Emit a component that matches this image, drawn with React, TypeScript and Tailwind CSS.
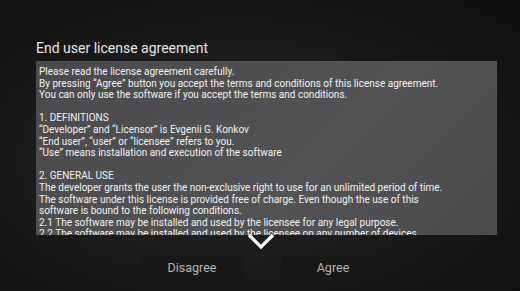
import React from "react";

const lines: string[] = [
  "Please read the license agreement carefully.",
  "By pressing \u201cAgree\u201d button you accept the terms and conditions of this license agreement.",
  "You can only use the software if you accept the terms and conditions.",
  "",
  "1. DEFINITIONS",
  "\u201cDeveloper\u201d and \u201cLicensor\u201d is Evgenii G. Konkov",
  "\u201cEnd user\u201d, \u201cuser\u201d or \u201clicensee\u201d refers to you.",
  "\u201cUse\u201d means installation and execution of the software",
  "",
  "2. GENERAL USE",
  "The developer grants the user the non-exclusive right to use for an unlimited period of time.",
  "The software under this license is provided free of charge. Even though the use of this",
  "software is bound to the following conditions.",
  "2.1 The software may be installed and used by the licensee for any legal purpose.",
  "2.2 The software may be installed and used by the licensee on any number of devices.",
];

export default function App() {
  return (
    <div
      className="relative w-[520px] h-[291px] overflow-hidden flex flex-col bg-[radial-gradient(ellipse_at_45%_55%,#262626_0%,#1b1b1b_45%,#0e0e0e_100%)]"
      style={{ fontFamily: "Roboto, 'Liberation Sans', sans-serif" }}
    >
      <h1 className="pl-[36px] pt-[39px] text-[14px] leading-[18px] text-[#e6e6e6]">
        End user license agreement
      </h1>

      <div className="relative mt-[4px] ml-[36px] w-[461px] h-[174px]">
        <div className="w-full h-full overflow-hidden bg-[linear-gradient(135deg,#4a4a4c_0%,#535355_60%,#4c4c4e_100%)] pl-[3px] pt-[5px]">
          {lines.map((line, i) => (
            <p key={i} className="text-[10px] leading-[11.6px] h-[11.6px] text-[#f2f2f2] whitespace-nowrap">
              {line}
            </p>
          ))}
        </div>

        {/* scroll hint */}
        <svg
          className="absolute left-[210px] top-[171px]"
          width="30"
          height="20"
          viewBox="0 0 30 20"
        >
          <path d="M3 3 L15 15 L27 3" fill="none" stroke="#ffffff" strokeWidth="3.2" />
        </svg>
      </div>

      <div className="flex justify-center gap-[38px] mt-[21px] pl-[5px]">
        <button className="w-[103px] h-[25px] bg-[#181818] text-[12.5px] text-[#b4b4b4]">
          Disagree
        </button>
        <button className="w-[103px] h-[25px] bg-[#181818] text-[12.5px] text-[#b4b4b4]">
          Agree
        </button>
      </div>
    </div>
  );
}
